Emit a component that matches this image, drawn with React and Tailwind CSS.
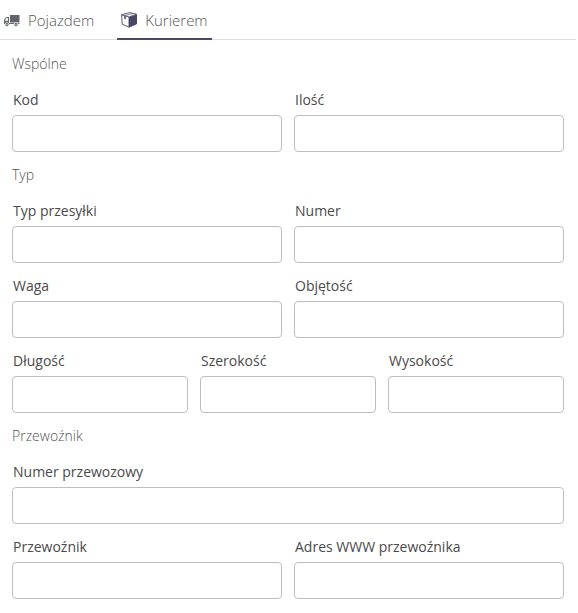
import { useState } from "react";
import clsx from "clsx";

const TruckIcon = () => (
  <svg viewBox="0 0 16 13" className="h-[13px] w-4" fill="#626469" aria-hidden="true">
    <path d="M6 1h9.5v7.5H6z" />
    <path
      fillRule="evenodd"
      d="M5 3H3Q2.4 3 2 3.4L0.5 5Q0 5.5 0 6v4h5zM4 4v2.8H1V6L2.8 4z"
    />
    <path d="M5 9h10.5v1H5z" />
    <circle cx="3" cy="10.5" r="2" stroke="#fff" strokeWidth="0.7" />
    <circle cx="12" cy="10.5" r="2" stroke="#fff" strokeWidth="0.7" />
    <circle cx="3" cy="10.5" r="0.6" fill="#fff" />
    <circle cx="12" cy="10.5" r="0.6" fill="#fff" />
  </svg>
);

const BoxIcon = () => (
  <svg viewBox="0 0 16 16" className="size-4" aria-hidden="true">
    <path
      fill="#fff"
      stroke="#4a4964"
      strokeWidth="0.9"
      strokeLinejoin="round"
      d="M0.6 2.8L8.5 0.6L15.4 2.2V11.8L8 15.2L1.2 12.2z"
    />
    <path fill="#4a4964" d="M8 5L16 2.4V12L8 15.6z" />
    <path fill="none" stroke="#4a4964" strokeWidth="0.9" d="M0.6 2.8L8 5L15.4 2.2M8 5v10" />
    <path fill="none" stroke="#4a4964" strokeWidth="0.7" d="M4 3.6L11.8 1.4" />
    <path fill="#4a4964" d="M3.2 3.8L4.8 4.2V7.4L3.2 6.8z" />
  </svg>
);

const tabs = [
  { id: "vehicle", label: "Pojazdem", icon: TruckIcon },
  { id: "courier", label: "Kurierem", icon: BoxIcon },
];

const sections = [
  {
    title: "Wspólne",
    rows: [[["code", "Kod"], ["quantity", "Ilość"]]],
  },
  {
    title: "Typ",
    rows: [
      [["type", "Typ przesyłki"], ["number", "Numer"]],
      [["weight", "Waga"], ["volume", "Objętość"]],
      [["length", "Długość"], ["width", "Szerokość"], ["height", "Wysokość"]],
    ],
  },
  {
    title: "Przewoźnik",
    rows: [
      [["waybill", "Numer przewozowy"]],
      [["carrier", "Przewoźnik"], ["website", "Adres WWW przewoźnika"]],
    ],
  },
];

const columns = {
  1: "grid-cols-1",
  2: "grid-cols-2",
  3: "grid-cols-3",
};

function Field({ id, label }) {
  return (
    <div className="flex min-w-0 flex-col gap-[5px]">
      <label htmlFor={id} className="pl-px text-sm text-[#4a4a4a]">
        {label}
      </label>
      <input
        id={id}
        name={id}
        type="text"
        className="h-[37px] w-full rounded border border-[#bfbfbf] bg-white px-3 text-sm text-[#4a4a4a] outline-none focus:border-[#4a4964]"
      />
    </div>
  );
}

export default function App() {
  const [active, setActive] = useState("courier");

  return (
    <div className="mr-0.5 bg-white font-['Open_Sans',sans-serif]">
      {/* TABS */}
      <div role="tablist" className="flex gap-[19px] border-b border-[#ddd]">
        {tabs.map(({ id, label, icon: Icon }) => (
          <button
            key={id}
            type="button"
            role="tab"
            aria-selected={active === id}
            onClick={() => setActive(id)}
            className={clsx(
              "-mb-px flex h-10 items-center gap-2 border-b-2 px-1 pt-0.5 text-[15px] font-light text-[#555]",
              active === id ? "border-[#4a4964]" : "border-transparent"
            )}
          >
            <Icon />
            {label}
          </button>
        ))}
      </div>

      {/* FORM */}
      <form className="px-3 pt-3.5 pb-3">
        {sections.map((section) => (
          <fieldset key={section.title} className="mb-[13px] last:mb-0">
            <legend className="mb-4 text-sm font-light text-[#555]">{section.title}</legend>
            <div className="flex flex-col gap-[13px]">
              {section.rows.map((row) => (
                <div key={row[0][0]} className={clsx("grid gap-3", columns[row.length])}>
                  {row.map(([id, label]) => (
                    <Field key={id} id={id} label={label} />
                  ))}
                </div>
              ))}
            </div>
          </fieldset>
        ))}
      </form>
    </div>
  );
}
